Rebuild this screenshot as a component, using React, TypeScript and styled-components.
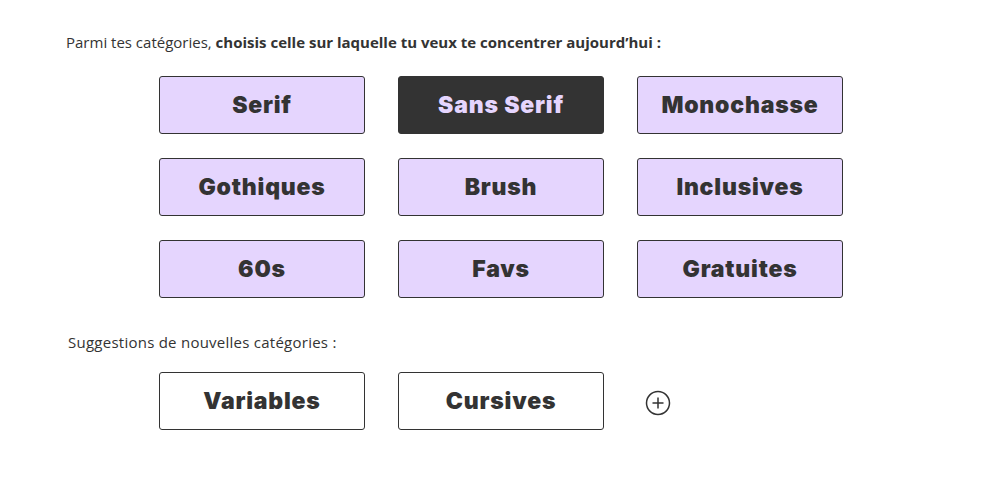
import React from "react";
import styled, { createGlobalStyle } from "styled-components";

const Global = createGlobalStyle`
  html, body { margin: 0; padding: 0; background: #ffffff; }
  body { font-family: "Open Sans", "Lato", sans-serif; color: #333333; }
`;

const Page = styled.div`
  width: 1002px;
  height: 484px;
  box-sizing: border-box;
  padding: 32px 0 0 66px;
`;

const Prompt = styled.p<{ $indent?: number; $top?: number; $spacing?: number }>`
  margin: ${(p) => p.$top ?? 0}px 0 0 0;
  padding-left: ${(p) => p.$indent ?? 0}px;
  font-size: 15px;
  line-height: 20px;
  letter-spacing: ${(p) => p.$spacing ?? 0}px;
  color: #333333;
  b { font-weight: 700; }
`;

const Grid = styled.div<{ $top: number }>`
  display: grid;
  grid-template-columns: repeat(3, 206px);
  column-gap: 33px;
  row-gap: 24px;
  margin: ${(p) => p.$top}px 0 0 93px;
  align-items: center;
`;

const Chip = styled.button<{ $variant: "lavender" | "dark" | "outline" }>`
  box-sizing: border-box;
  height: 58px;
  border: 1.5px solid #333333;
  border-radius: 3px;
  background: ${(p) =>
    p.$variant === "dark" ? "#333333" : p.$variant === "lavender" ? "#e5d5fe" : "#ffffff"};
  color: ${(p) => (p.$variant === "dark" ? "#e5d5fe" : "#333333")};
  font-family: "Inter", "Lato", sans-serif;
  font-weight: 900;
  font-size: 23px;
  letter-spacing: 0.8px;
  padding: 0;
  cursor: pointer;
`;

const AddButton = styled.button`
  justify-self: start;
  align-self: start;
  margin: 18px 0 0 8px;
  width: 26px;
  height: 26px;
  padding: 0;
  border: none;
  background: transparent;
  display: flex;
  align-items: center;
  justify-content: center;
  cursor: pointer;
`;

const categories = [
  { label: "Serif" },
  { label: "Sans Serif", active: true },
  { label: "Monochasse" },
  { label: "Gothiques" },
  { label: "Brush" },
  { label: "Inclusives" },
  { label: "60s" },
  { label: "Favs" },
  { label: "Gratuites" },
];

export default function App() {
  return (
    <>
      <Global />
      <Page>
        <Prompt>
          Parmi tes catégories, <b>choisis celle sur laquelle tu veux te concentrer aujourd’hui :</b>
        </Prompt>
        <Grid $top={24}>
          {categories.map((c) => (
            <Chip key={c.label} $variant={c.active ? "dark" : "lavender"}>
              {c.label}
            </Chip>
          ))}
        </Grid>
        <Prompt $indent={2} $top={34} $spacing={0.25}>
          Suggestions de nouvelles catégories :
        </Prompt>
        <Grid $top={20}>
          <Chip $variant="outline">Variables</Chip>
          <Chip $variant="outline">Cursives</Chip>
          <AddButton aria-label="Ajouter">
            <svg width="26" height="26" viewBox="0 0 26 26" fill="none">
              <circle cx="13" cy="13" r="11.5" stroke="#333333" strokeWidth="1.5" />
              <path d="M13 7.5v11M7.5 13h11" stroke="#333333" strokeWidth="1.5" />
            </svg>
          </AddButton>
        </Grid>
      </Page>
    </>
  );
}
